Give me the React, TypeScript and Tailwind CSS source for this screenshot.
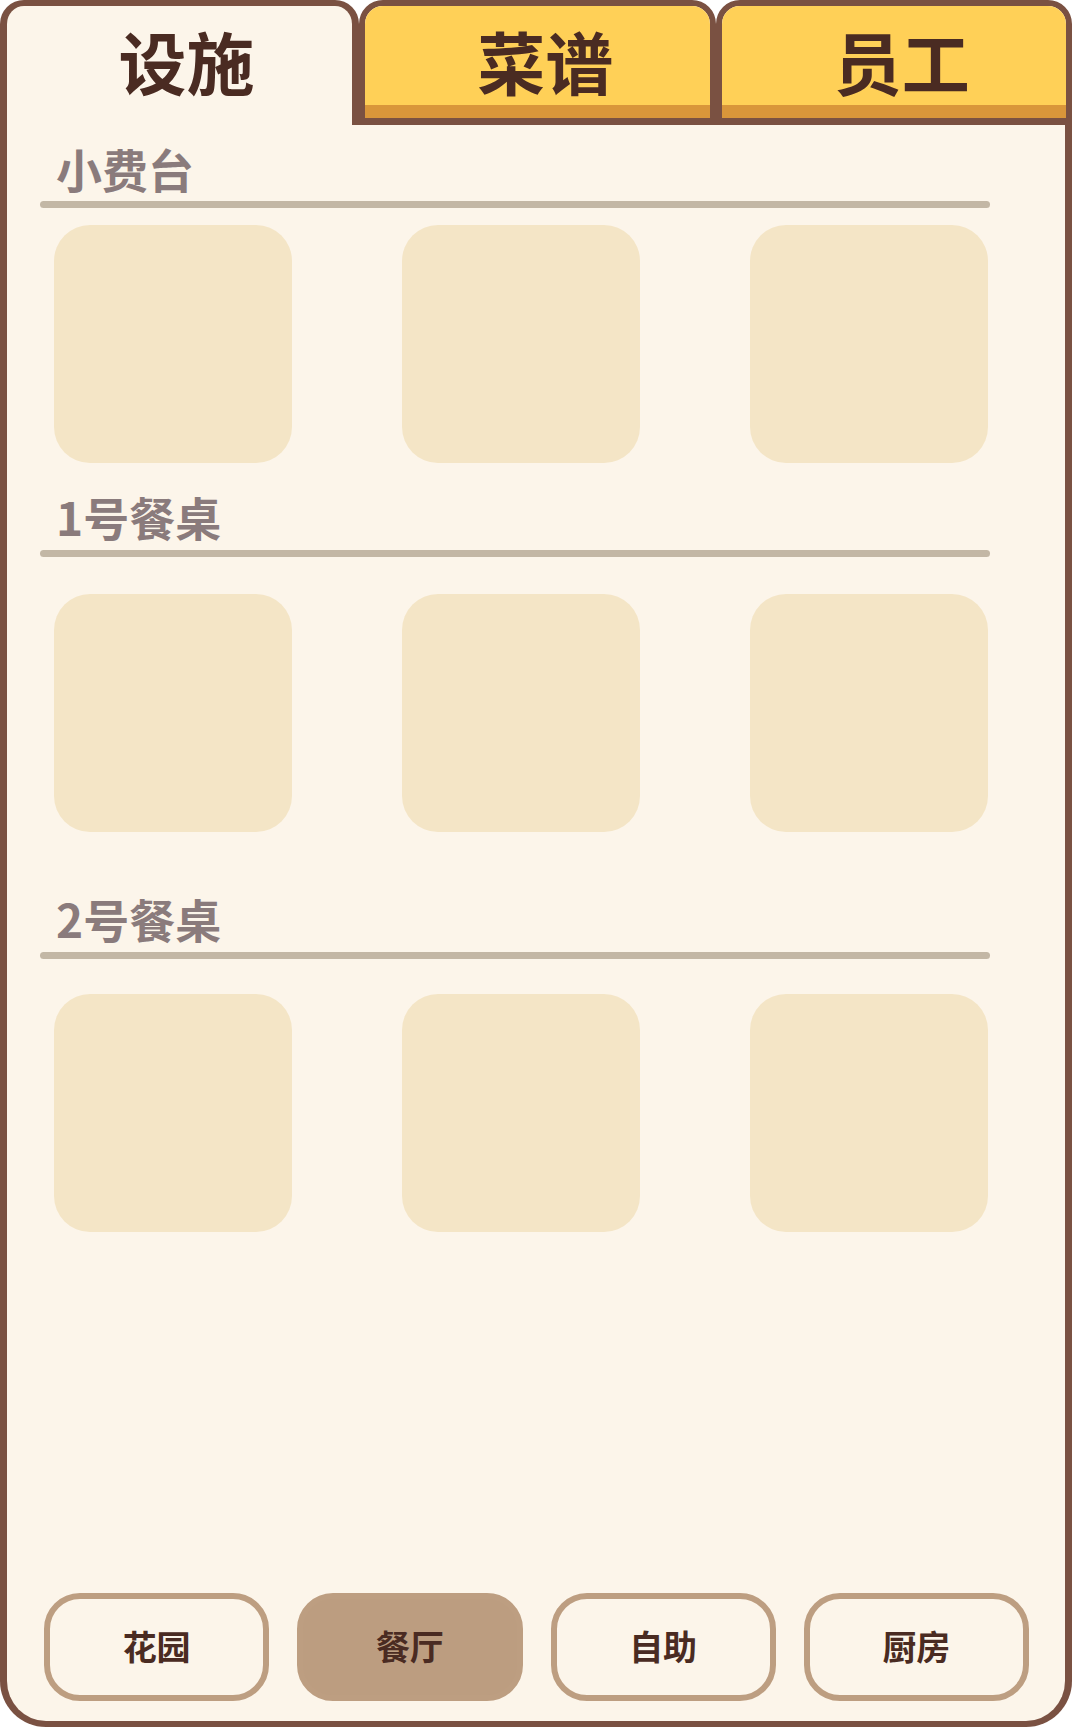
import React from "react";

const FONT = '"Noto Sans CJK SC", "Noto Sans", sans-serif';

function Card() {
  return <div className="h-[238px] w-[238px] rounded-[36px] bg-[#f4e5c6]" />;
}

function Section({
  title,
  headMt,
  lineMt,
  cardsMt,
}: {
  title: string;
  headMt: string;
  lineMt: string;
  cardsMt: string;
}) {
  return (
    <div className="flex flex-col">
      <div
        className={`${headMt} pl-[49px] text-[46px] font-bold leading-none text-[#8a7b7c]`}
      >
        {title}
      </div>
      <div
        className={`${lineMt} ml-[33px] h-[7px] w-[950px] rounded-full bg-[#c3b7a5]`}
      />
      <div className={`${cardsMt} ml-[47px] flex w-[934px] justify-between`}>
        <Card />
        <Card />
        <Card />
      </div>
    </div>
  );
}

function Tab({ label, active }: { label: string; active?: boolean }) {
  if (active) {
    return (
      <div className="flex h-[125px] w-[359px] flex-col rounded-t-[24px] border-x-[7px] border-t-[6px] border-[#7a5142] bg-[#fcf5ea]">
        <div className="pl-[14px] pt-[21px] text-center text-[68px] font-bold leading-none text-[#4a2b22]">
          {label}
        </div>
      </div>
    );
  }
  return (
    <div className="flex h-[125px] flex-1 flex-col overflow-hidden rounded-t-[24px] border-[6px] border-b-[7px] border-[#7a5142]">
      <div className="flex-1 bg-[#ffd057] pl-[16px] pt-[21px] text-center text-[68px] font-bold leading-none text-[#4a2b22]">
        {label}
      </div>
      <div className="h-[13px] bg-[#d9963a]" />
    </div>
  );
}

function Btn({ label, active }: { label: string; active?: boolean }) {
  return (
    <div
      className={`flex h-[108px] items-center justify-center rounded-[36px] border-[6px] border-[#bd9e81] pb-[3px] text-[34px] font-bold text-[#4a2b22] ${
        active ? "bg-[#bc9d80]" : "bg-[#fcf5ea]"
      }`}
    >
      {label}
    </div>
  );
}

export default function App() {
  return (
    <div
      className="flex h-[1727px] w-[1072px] flex-col bg-white"
      style={{ fontFamily: FONT }}
    >
      <div className="flex h-[125px]">
        <Tab label="设施" active />
        <Tab label="菜谱" />
        <Tab label="员工" />
      </div>
      <div className="flex flex-1 flex-col rounded-b-[46px] border-x-[7px] border-b-[6px] border-[#7a5142] bg-[#fcf5ea]">
        <Section title="小费台" headMt="mt-[20px]" lineMt="mt-[10px]" cardsMt="mt-[17px]" />
        <Section title="1号餐桌" headMt="mt-[30px]" lineMt="mt-[11px]" cardsMt="mt-[37px]" />
        <Section title="2号餐桌" headMt="mt-[63px]" lineMt="mt-[11px]" cardsMt="mt-[35px]" />
        <div className="flex-1" />
        <div className="mb-[20px] ml-[37px] grid w-[985px] grid-cols-4 gap-[28px]">
          <Btn label="花园" />
          <Btn label="餐厅" active />
          <Btn label="自助" />
          <Btn label="厨房" />
        </div>
      </div>
    </div>
  );
}
